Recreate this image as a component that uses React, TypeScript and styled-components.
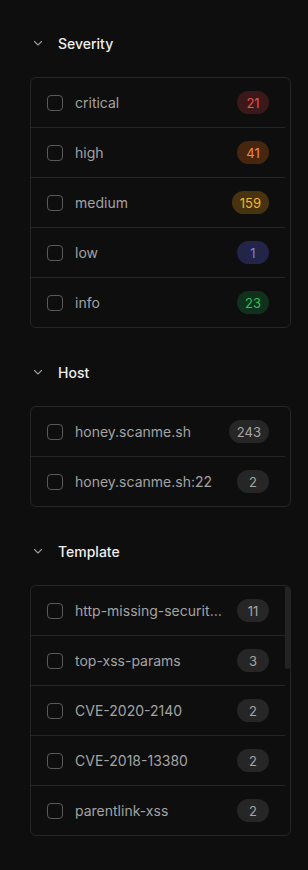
import React from "react";
import styled, { createGlobalStyle } from "styled-components";

type Tone = "critical" | "high" | "medium" | "low" | "info" | "neutral";

type Item = { label: string; count: number; tone?: Tone };

const SEVERITY: Item[] = [
  { label: "critical", count: 21, tone: "critical" },
  { label: "high", count: 41, tone: "high" },
  { label: "medium", count: 159, tone: "medium" },
  { label: "low", count: 1, tone: "low" },
  { label: "info", count: 23, tone: "info" },
];

const HOSTS: Item[] = [
  { label: "honey.scanme.sh", count: 243 },
  { label: "honey.scanme.sh:22", count: 2 },
];

const TEMPLATES: Item[] = [
  { label: "http-missing-security-headers", count: 11 },
  { label: "top-xss-params", count: 3 },
  { label: "CVE-2020-2140", count: 2 },
  { label: "CVE-2018-13380", count: 2 },
  { label: "parentlink-xss", count: 2 },
  { label: "CVE-2021-41773", count: 2 },
  { label: "CVE-2019-9978", count: 2 },
  { label: "tech-detect", count: 2 },
  { label: "ssl-dns-names", count: 1 },
  { label: "openssh-detect", count: 1 },
  { label: "waf-detect", count: 1 },
  { label: "nginx-version", count: 1 },
  { label: "robots-txt", count: 1 },
  { label: "cookies-without-secure", count: 1 },
  { label: "options-method", count: 1 },
];

const TONES: Record<Tone, { bg: string; fg: string }> = {
  critical: { bg: "#3b1819", fg: "#e5534f" },
  high: { bg: "#47260f", fg: "#f28b3b" },
  medium: { bg: "#473310", fg: "#f3b72c" },
  low: { bg: "#232548", fg: "#7c80e6" },
  info: { bg: "#10321c", fg: "#2fbe5c" },
  neutral: { bg: "#262626", fg: "#a6a6a6" },
};

const ROW = 50;
const VISIBLE = 5;

export default function App() {
  return (
    <>
      <GlobalStyle />
      <Page>
        <FilterGroup title="Severity" items={SEVERITY} />
        <FilterGroup title="Host" items={HOSTS} />
        <FilterGroup title="Template" items={TEMPLATES} />
      </Page>
    </>
  );
}

function FilterGroup({ title, items }: { title: string; items: Item[] }) {
  const viewH = VISIBLE * ROW - 1;
  const contentH = items.length * ROW - 1;
  const thumbH = contentH > viewH ? Math.round((viewH / contentH) * viewH) : 0;

  return (
    <Section>
      <Header>
        <Chevron viewBox="0 0 12 12">
          <polyline points="2.5,4.5 6,8 9.5,4.5" />
        </Chevron>
        <Title>{title}</Title>
      </Header>
      <Box>
        <List>
          {items.map((item) => (
            <Row key={item.label}>
              <Check />
              <Label>{item.label}</Label>
              <Badge $tone={item.tone ?? "neutral"}>{item.count}</Badge>
            </Row>
          ))}
        </List>
        {thumbH > 0 && <Thumb style={{ height: thumbH }} />}
      </Box>
    </Section>
  );
}

const GlobalStyle = createGlobalStyle`
  html, body {
    margin: 0;
    background: #0e0e0e;
    font-family: Inter, "Noto Sans", sans-serif;
  }
`;

const Page = styled.div`
  width: 308px;
  min-height: 870px;
  box-sizing: border-box;
  padding: 33px 17px 0 30px;
  display: flex;
  flex-direction: column;
  gap: 34px;
`;

const Section = styled.section`
  display: flex;
  flex-direction: column;
  gap: 24px;
`;

const Header = styled.div`
  height: 20px;
  display: flex;
  align-items: center;
  gap: 14px;
  padding-left: 2px;
`;

const Chevron = styled.svg`
  width: 12px;
  height: 12px;
  fill: none;
  stroke: #9a9a9a;
  stroke-width: 1.1;
  stroke-linecap: round;
  stroke-linejoin: round;
`;

const Title = styled.h3`
  margin: 0;
  font-size: 14px;
  font-weight: 500;
  color: #ededed;
`;

const Box = styled.div`
  position: relative;
  border: 1px solid #262626;
  border-radius: 6px;
  overflow: hidden;
`;

const List = styled.div`
  max-height: ${VISIBLE * ROW - 1}px;
  overflow-y: auto;
  margin-right: 5px;
  scrollbar-width: none;

  &::-webkit-scrollbar {
    display: none;
  }
`;

const Thumb = styled.div`
  position: absolute;
  top: 0;
  right: 0;
  width: 5px;
  border-radius: 3px;
  background: #232323;
`;

const Row = styled.div`
  height: ${ROW - 1}px;
  display: flex;
  align-items: center;
  gap: 12px;
  padding: 0 16px;
  border-bottom: 1px solid #262626;

  &:last-child {
    border-bottom: none;
  }
`;

const Check = styled.span`
  flex: none;
  width: 16px;
  height: 16px;
  box-sizing: border-box;
  border: 1px solid #5a5a5a;
  border-radius: 4px;
`;

const Label = styled.span`
  flex: 1;
  min-width: 0;
  font-size: 14px;
  color: #a3a3a3;
  white-space: nowrap;
  overflow: hidden;
  text-overflow: ellipsis;
  padding-right: 2px;
`;

const Badge = styled.span<{ $tone: Tone }>`
  flex: none;
  min-width: 32px;
  height: 23px;
  box-sizing: border-box;
  padding: 0 8px;
  border-radius: 12px;
  display: flex;
  align-items: center;
  justify-content: center;
  font-size: 13px;
  background: ${(p) => TONES[p.$tone].bg};
  color: ${(p) => TONES[p.$tone].fg};
`;
